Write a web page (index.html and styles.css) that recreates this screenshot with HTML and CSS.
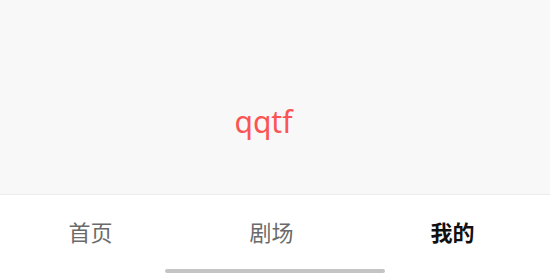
FILE: index.html
```html
<!DOCTYPE html>
<html lang="zh">
<head>
<meta charset="utf-8">
<title>qqtf</title>
<link rel="stylesheet" href="styles.css">
</head>
<body>
<div class="app">
  <main class="content">
    <div class="title">qqtf</div>
  </main>
  <nav class="tabbar">
    <div class="tabs">
      <div class="tab">首页</div>
      <div class="tab">剧场</div>
      <div class="tab active">我的</div>
    </div>
    <div class="indicator-row"><div class="indicator"></div></div>
  </nav>
</div>
</body>
</html>
```
FILE: styles.css
```css
html, body {
  margin: 0;
  padding: 0;
  height: 100%;
}
body {
  font-family: "Noto Sans", "Noto Sans CJK SC", sans-serif;
  background: #ffffff;
}
.app {
  display: flex;
  flex-direction: column;
  height: 275px;
  width: 550px;
}
.content {
  flex: 1;
  background: #f8f8f8;
  border-bottom: 1px solid #ececec;
  display: flex;
  flex-direction: column;
  align-items: center;
  padding-top: 107px;
  padding-right: 23px;
  box-sizing: border-box;
}
.title {
  font-size: 30px;
  line-height: 30px;
  color: #fb5454;
}
.tabbar {
  height: 80px;
  background: #ffffff;
  display: flex;
  flex-direction: column;
}
.tabs {
  height: 72px;
  display: grid;
  grid-template-columns: 1fr 1fr 1fr;
  padding-right: 7px;
}
.tab {
  display: flex;
  align-items: center;
  justify-content: center;
  font-family: "Noto Sans CJK SC", sans-serif;
  font-size: 22px;
  line-height: 22px;
  color: #6a6a6a;
}
.tab.active {
  color: #111111;
  font-weight: 700;
}
.indicator-row {
  display: flex;
  justify-content: center;
  padding-top: 2px;
}
.indicator {
  width: 220px;
  height: 4px;
  border-radius: 2px;
  background: #c4c4c4;
}
```
